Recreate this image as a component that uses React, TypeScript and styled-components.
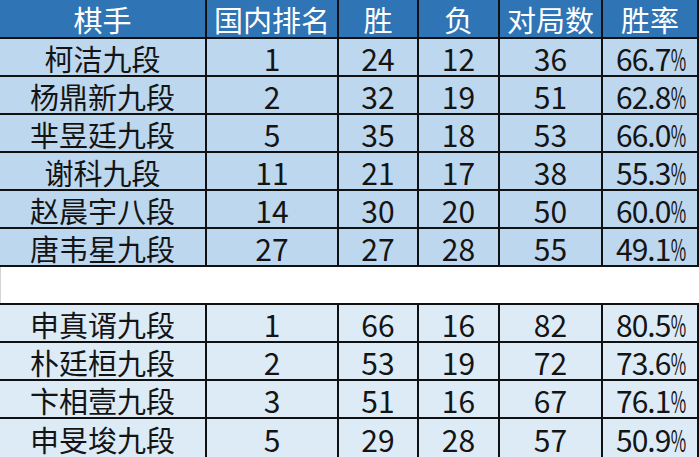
import React from "react";
import styled, { createGlobalStyle } from "styled-components";

type Player = {
  name: string;
  rank: number;
  win: number;
  loss: number;
  games: number;
  rate: number;
};

const chinaPlayers: Player[] = [
  { name: "柯洁九段", rank: 1, win: 24, loss: 12, games: 36, rate: 66.7 },
  { name: "杨鼎新九段", rank: 2, win: 32, loss: 19, games: 51, rate: 62.8 },
  { name: "芈昱廷九段", rank: 5, win: 35, loss: 18, games: 53, rate: 66.0 },
  { name: "谢科九段", rank: 11, win: 21, loss: 17, games: 38, rate: 55.3 },
  { name: "赵晨宇八段", rank: 14, win: 30, loss: 20, games: 50, rate: 60.0 },
  { name: "唐韦星九段", rank: 27, win: 27, loss: 28, games: 55, rate: 49.1 },
];

const koreaPlayers: Player[] = [
  { name: "申真谞九段", rank: 1, win: 66, loss: 16, games: 82, rate: 80.5 },
  { name: "朴廷桓九段", rank: 2, win: 53, loss: 19, games: 72, rate: 73.6 },
  { name: "卞相壹九段", rank: 3, win: 51, loss: 16, games: 67, rate: 76.1 },
  { name: "申旻埈九段", rank: 5, win: 29, loss: 28, games: 57, rate: 50.9 },
];

const headers = ["棋手", "国内排名", "胜", "负", "对局数", "胜率"];

const GlobalStyle = createGlobalStyle`
  body {
    margin: 0;
    background: #ffffff;
    font-family: "Noto Sans CJK SC", "Microsoft YaHei", sans-serif;
  }
`;

const Sheet = styled.div`
  display: grid;
  grid-template-columns: 205px 130px 78px 79px 101px 94px;
  grid-template-rows: 37px repeat(10, 36px) 38px;
  column-gap: 2px;
  row-gap: 2px;
  width: 699px;
  padding-right: 2px;
  box-sizing: border-box;
  background: #111111;
`;

const HeaderCell = styled.div`
  display: flex;
  align-items: center;
  justify-content: center;
  background: #2f75b5;
  color: #ffffff;
  font-size: 29px;
  line-height: 1;
  padding-top: 1px;
`;

const Cell = styled.div<{ $tone: "dark" | "light" }>`
  display: flex;
  align-items: center;
  justify-content: center;
  background: ${({ $tone }) => ($tone === "dark" ? "#bdd7ee" : "#ddebf7")};
  color: #141414;
  font-size: 29px;
  line-height: 1;
  padding-top: 3px;
  white-space: nowrap;
`;

const NumberCell = styled(Cell)`
  font-size: 30px;
  padding-top: 2px;
`;

const RateCell = styled(NumberCell)`
  letter-spacing: -1px;
  padding-left: 2px;
`;

const Percent = styled.span`
  display: inline-block;
  transform: scaleX(0.56);
  margin: 0 -6px 0 -5px;
`;

const Spacer = styled.div`
  grid-column: 1 / -1;
  background: #ffffff;
  border-left: 1px solid #d4d4d4;
  margin-right: -2px;
`;

const PlayerRows = ({ players, tone }: { players: Player[]; tone: "dark" | "light" }) => (
  <>
    {players.map((p) => (
      <React.Fragment key={p.name}>
        <Cell $tone={tone}>{p.name}</Cell>
        <NumberCell $tone={tone}>{p.rank}</NumberCell>
        <NumberCell $tone={tone}>{p.win}</NumberCell>
        <NumberCell $tone={tone}>{p.loss}</NumberCell>
        <NumberCell $tone={tone}>{p.games}</NumberCell>
        <RateCell $tone={tone}>
          {p.rate.toFixed(1)}
          <Percent>%</Percent>
        </RateCell>
      </React.Fragment>
    ))}
  </>
);

const App = () => {
  return (
    <>
      <GlobalStyle />
      <Sheet>
        {headers.map((h) => (
          <HeaderCell key={h}>{h}</HeaderCell>
        ))}
        <PlayerRows players={chinaPlayers} tone="dark" />
        <Spacer />
        <PlayerRows players={koreaPlayers} tone="light" />
      </Sheet>
    </>
  );
};

export default App;
